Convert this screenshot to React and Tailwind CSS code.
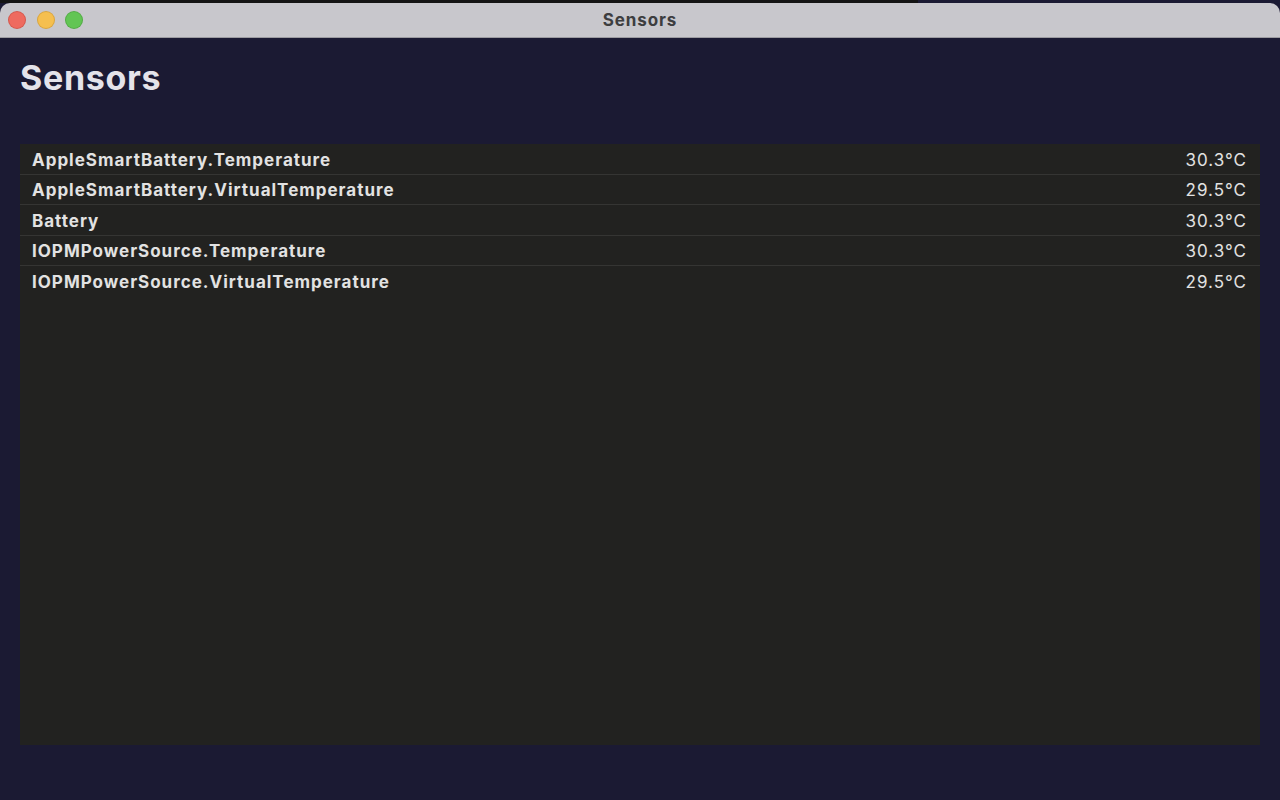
const rows = [
  { name: 'AppleSmartBattery.Temperature', value: '30.3°C' },
  { name: 'AppleSmartBattery.VirtualTemperature', value: '29.5°C' },
  { name: 'Battery', value: '30.3°C' },
  { name: 'IOPMPowerSource.Temperature', value: '30.3°C' },
  { name: 'IOPMPowerSource.VirtualTemperature', value: '29.5°C' }
];

function TrafficLights() {
  return (
    <div className="flex items-center gap-[12.5px] pl-[9px]">
      <span className="block h-[16px] w-[16px] rounded-full bg-[#ee6a5f] ring-1 ring-[#d4574c]" />
      <span className="block h-[16px] w-[16px] rounded-full bg-[#f5bf4f] ring-1 ring-[#d9a53e]" />
      <span className="block h-[16px] w-[16px] rounded-full bg-[#62c554] ring-1 ring-[#52ab45]" />
    </div>
  );
}

export default function App() {
  return (
    <div
      className="flex h-[800px] w-[1280px] flex-col overflow-hidden bg-[#1b1a33]"
      style={{ fontFamily: 'Inter, "Noto Sans", sans-serif' }}
    >
      {/* desktop strip behind the window */}
      <div className="flex h-[3px] shrink-0">
        <div className="w-[918px] bg-[#141414]" />
        <div className="flex-1 bg-[#1b1a33]" />
      </div>

      <div className="relative flex h-[35px] shrink-0 items-center rounded-t-[10px] border-b border-[#9d9ca1] bg-[#c8c7cc]">
        <TrafficLights />
        <span className="absolute left-1/2 top-[5px] -translate-x-1/2 text-[17px] font-bold tracking-[0.9px] text-[#3d3d3f]">
          Sensors
        </span>
      </div>

      <div className="flex flex-1 flex-col px-[20px] pb-[55px]">
        <h1 className="mt-[20px] h-[86px] text-[34px] font-bold leading-[40px] tracking-[0.7px] text-[#e4e3ea]">
          Sensors
        </h1>

        <div className="flex-1 bg-[#222220]">
          {rows.map((row, i) => (
            <div
              key={row.name}
              className={`flex h-[30.5px] items-center justify-between pl-[12px] pr-[13px] pt-[3px] ${
                i < rows.length - 1 ? 'border-b border-[#353533]' : ''
              }`}
            >
              <span className="text-[17px] font-bold tracking-[1px] text-[#e2e2e2]">{row.name}</span>
              <span className="text-[17px] tracking-[1px] text-[#e2e2e2]">{row.value}</span>
            </div>
          ))}
        </div>
      </div>
    </div>
  );
}
